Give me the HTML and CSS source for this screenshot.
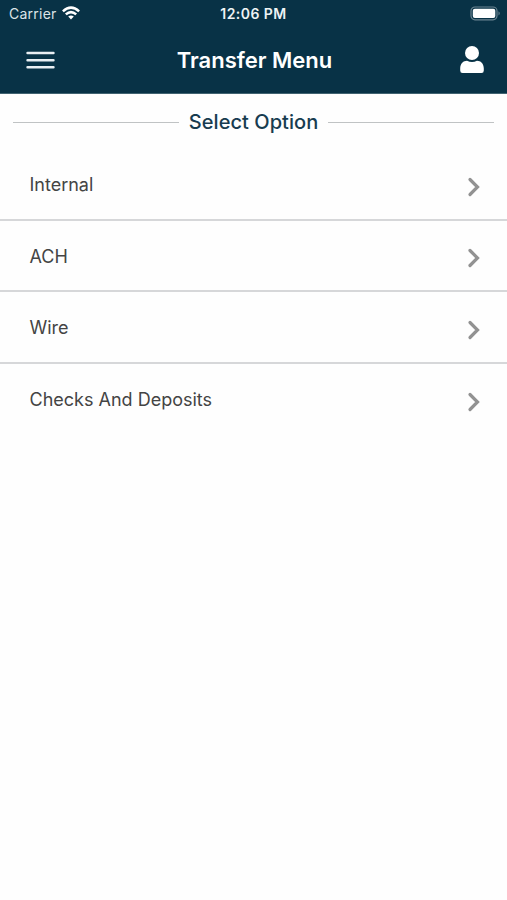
FILE: index.html
```html
<!DOCTYPE html>
<html lang="en">
<head>
<meta charset="utf-8">
<title>Transfer Menu</title>
<link rel="stylesheet" href="styles.css">
</head>
<body>
<header class="header">
  <div class="status">
    <div class="carrier"><span class="carrier-name">Carrier</span>
      <svg class="wifi" width="18" height="14" viewBox="0 0 18 14" fill="none" stroke="#fff" stroke-width="2.5"><path d="M.9 5.3Q9-2.1 17.100 5.300M3.800 8.400Q9 3.800 14.200 8.400"/><path d="M6.200 10.500Q9 8.300 11.800 10.500L9 13.500Z" fill="#fff" stroke="none"/></svg>
    </div>
    <time class="time">12:06 PM</time>
    <svg class="battery" width="31" height="15" viewBox="0 0 31 15"><rect x="1" y="1" width="26" height="12.800" rx="4" fill="none" stroke="#6b8491" stroke-width="1.200"/><rect x="2.800" y="2.800" width="22.500" height="9.200" rx="2" fill="#fff"/><path d="M28.500 5.200Q31 7.300 28.500 9.400Z" fill="#6b8491"/></svg>
  </div>
  <nav class="navbar">
    <button class="icon-button" aria-label="Menu"><svg width="29" height="20" viewBox="0 0 29 20" stroke="#e9eff3" stroke-width="2.400" stroke-linecap="round"><path d="M1.500 3H27.500M1.500 10.300H27.500M1.500 17.300H27.500"/></svg></button>
    <h1 class="title">Transfer Menu</h1>
    <button class="icon-button" aria-label="Profile"><svg width="24" height="28" viewBox="0 0 24 28" fill="#fff"><circle cx="12" cy="7" r="7"/><path d="M.2 24.500V22.500C.2 17.500 3.500 14.800 7 14.800Q9.500 16 12 16T17 14.800C20.500 14.800 23.800 17.500 23.800 22.500V24.500Q23.800 27 21.500 27H2.500Q.2 27 .2 24.500Z"/></svg></button>
  </nav>
</header>
<main>
  <h2 class="section">Select Option</h2>
  <ul class="options">
    <li class="option"><span>Internal</span><svg class="chevron" width="14" height="20" viewBox="0 0 14 20"><path d="M3 2.500L10.500 10L3 17.500"/></svg></li>
    <li class="option"><span>ACH</span><svg class="chevron" width="14" height="20" viewBox="0 0 14 20"><path d="M3 2.500L10.500 10L3 17.500"/></svg></li>
    <li class="option"><span>Wire</span><svg class="chevron" width="14" height="20" viewBox="0 0 14 20"><path d="M3 2.500L10.500 10L3 17.500"/></svg></li>
    <li class="option"><span>Checks And Deposits</span><svg class="chevron" width="14" height="20" viewBox="0 0 14 20"><path d="M3 2.500L10.500 10L3 17.500"/></svg></li>
  </ul>
</main>
</body>
</html>
```
FILE: styles.css
```css
* { box-sizing: border-box; }
body { margin: 0; min-height: 100vh; background: #fefefe; font-family: Inter, "Liberation Sans", sans-serif; color: #444; }
svg { display: block; }
.header { height: 94px; background: #083246; color: #fff; border-bottom: 1px solid #416371; }
.status { height: 27px; padding: 0 6px 0 9px; display: grid; grid-template-columns: 1fr auto 1fr; align-items: center; }
.carrier { display: flex; align-items: center; gap: 5px; color: #dce4e8; font-size: 14px; letter-spacing: 0.250px; }
.wifi { margin-top: -1px; }
.time { margin-left: -3px; font-size: 14px; font-weight: 600; letter-spacing: 0.450px; color: #eef3f5; }
.battery { justify-self: end; }
.navbar { height: 66px; padding: 0 23px 0 25px; display: grid; grid-template-columns: 1fr auto 1fr; align-items: center; }
.icon-button { padding: 0; border: 0; background: none; justify-self: start; }
.icon-button:first-child { margin-left: 1px; }
.icon-button:last-child { justify-self: end; }
.title { margin: 0; font-size: 22px; font-weight: 560; line-height: 28px; }
.section { margin: 0; height: 55px; padding: 1px 13px 0; display: flex; align-items: center; gap: 10px; font-size: 20px; font-weight: 500; letter-spacing: 0.050px; color: #173c50; white-space: nowrap; }
.section::before, .section::after { content: ""; flex: 1; height: 1px; margin-top: 1px; background: #c0c3c4; }
.options { margin: 0; padding: 0; list-style: none; }
.option { height: 71.600px; padding: 2px 26.500px 0 29.500px; display: flex; justify-content: space-between; align-items: center; font-size: 18px; }
.option:not(:last-child) { border-bottom: 2px solid #d6d7d9; }
.option:last-child { height: 70px; }
.chevron { margin-top: 4px; fill: none; stroke: #929292; stroke-width: 3.200; stroke-linecap: round; stroke-linejoin: miter; }
```
